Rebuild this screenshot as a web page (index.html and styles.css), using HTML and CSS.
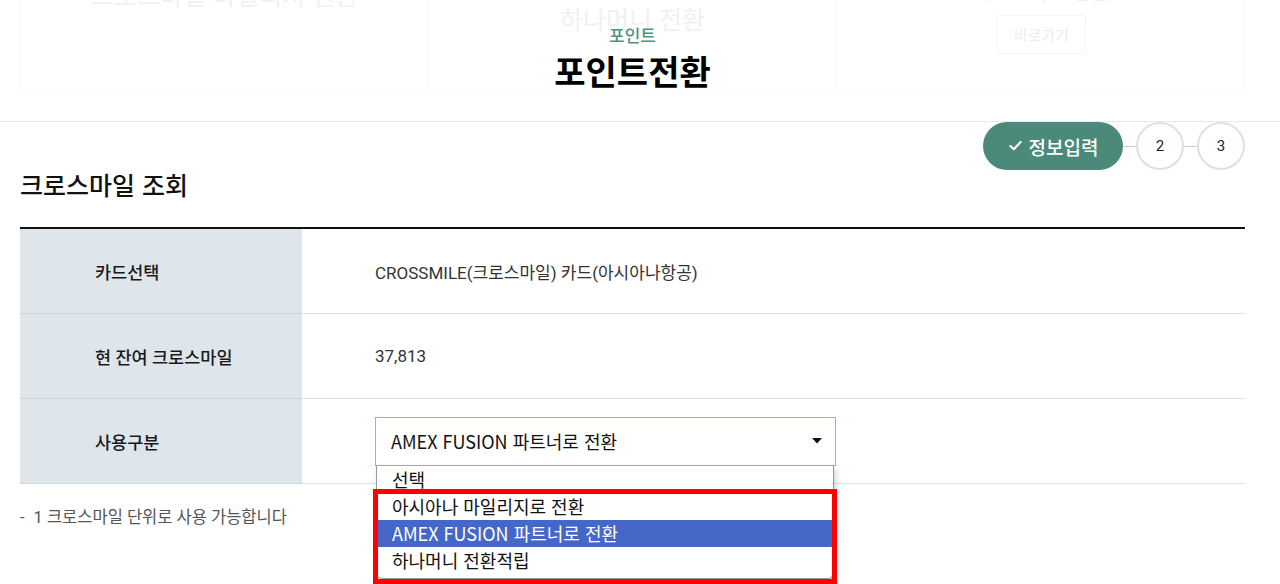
FILE: index.html
```html
<!DOCTYPE html>
<html lang="ko">
<head>
<meta charset="utf-8">
<title>포인트전환</title>
<link rel="stylesheet" href="styles.css">
</head>
<body>
<header class="page-head">
  <div class="ghost">
    <div class="ghost-col"><span class="ghost-cut">크로스마일 마일리지 전환</span></div>
    <div class="ghost-col"><span class="ghost-title">하나머니 전환</span></div>
    <div class="ghost-col"><span class="ghost-cut small">기프트카드 전환</span><span class="ghost-btn">바로가기</span></div>
  </div>
  <div class="head-titles">
    <p class="head-sub">포인트</p>
    <h1 class="head-main">포인트전환</h1>
  </div>
</header>

<main class="content">
  <div class="steps">
    <div class="step step-on"><svg class="check" viewBox="0 0 16 16" width="15" height="15"><path d="M2.5 8.5 L6.2 12 L13.5 4.2" fill="none" stroke="#fff" stroke-width="2.2" stroke-linecap="round" stroke-linejoin="round"/></svg>정보입력</div>
    <span class="step-line"></span>
    <div class="step step-num">2</div>
    <span class="step-line"></span>
    <div class="step step-num">3</div>
  </div>

  <h2 class="sec-title">크로스마일 조회</h2>

  <div class="info-table">
    <div class="row">
      <div class="th">카드선택</div>
      <div class="td">CROSSMILE(크로스마일) 카드(아시아나항공)</div>
    </div>
    <div class="row">
      <div class="th">현 잔여 크로스마일</div>
      <div class="td">37,813</div>
    </div>
    <div class="row">
      <div class="th">사용구분</div>
      <div class="td">
        <div class="select-wrap">
          <div class="select">
            <span>AMEX FUSION 파트너로 전환</span>
            <svg class="caret" viewBox="0 0 10 6" width="10" height="6"><path d="M0 0 H10 L5 5.5 Z" fill="#111"/></svg>
          </div>
          <ul class="options">
            <li class="opt">선택</li>
            <li class="opt">아시아나 마일리지로 전환</li>
            <li class="opt opt-sel">AMEX FUSION 파트너로 전환</li>
            <li class="opt">하나머니 전환적립</li>
          </ul>
          <div class="mark"></div>
        </div>
      </div>
    </div>
  </div>

  <p class="note"><span class="dash">-</span>1 크로스마일 단위로 사용 가능합니다</p>
</main>
</body>
</html>
```

FILE: styles.css
```css
* { box-sizing: border-box; }
html, body { margin: 0; padding: 0; }
body {
  width: 1280px;
  height: 584px;
  overflow: hidden;
  background: #fff;
  font-family: Roboto, "Noto Sans CJK KR", sans-serif;
  color: #222;
}

.page-head {
  position: relative;
  height: 122px;
  border-bottom: 1px solid #e8e8e8;
  overflow: hidden;
}
.ghost {
  position: absolute;
  left: 20px;
  top: 0;
  width: 1225px;
  height: 92px;
  display: grid;
  grid-template-columns: 408px 408px 409px;
  border: 1px solid #f9fafa;
  border-top: none;
  font-family: "Noto Sans CJK KR", sans-serif;
}
.ghost-col {
  position: relative;
  display: flex;
  flex-direction: column;
  align-items: center;
  border-right: 1px solid #f9fafa;
}
.ghost-col:last-child { border-right: none; }
.ghost-title {
  margin-top: 2px;
  font-size: 25px;
  line-height: 32px;
  color: #eef2f1;
}
.ghost-cut {
  margin-top: -22px;
  font-size: 25px;
  line-height: 32px;
  color: #eef2f1;
}
.ghost-cut.small { margin-top: -24px; font-size: 20px; }
.ghost-btn {
  margin-top: 7px;
  width: 89px;
  height: 39px;
  border: 1px solid #f5f5f5;
  border-radius: 3px;
  font-size: 15px;
  line-height: 37px;
  text-align: center;
  color: #ededed;
}
.head-titles {
  position: relative;
  display: flex;
  flex-direction: column;
  align-items: center;
  padding: 23px 35px 0 20px;
  font-family: "Noto Sans CJK KR", sans-serif;
}
.head-sub {
  margin: 0;
  font-size: 17px;
  line-height: 24px;
  font-weight: 500;
  color: #4f9381;
}
.head-main {
  margin: 4px 0 0;
  font-size: 34px;
  line-height: 40px;
  font-weight: 700;
  color: #000;
}

.content {
  padding: 0 35px 0 20px;
}
.steps {
  display: flex;
  justify-content: flex-end;
  align-items: center;
  height: 48px;
}
.step {
  height: 48px;
  border-radius: 24px;
  display: flex;
  align-items: center;
  justify-content: center;
}
.step-on {
  width: 140px;
  background: #4b8a7b;
  color: #fff;
  font-family: "Noto Sans CJK KR", sans-serif;
  font-size: 19px;
  font-weight: 500;
  gap: 6px;
}
.check { margin-top: -1px; }
.step-num {
  width: 48px;
  border: 2px solid #e0e0e0;
  background: #fff;
  font-size: 15px;
  color: #222;
}
.step-line {
  width: 13px;
  height: 1px;
  background: #cfcfcf;
}

.sec-title {
  margin: 0;
  font-family: "Noto Sans CJK KR", sans-serif;
  font-size: 25px;
  line-height: 28px;
  font-weight: 500;
  color: #111;
}

.info-table {
  margin-top: 29px;
  border-top: 2px solid #111;
}
.row {
  display: flex;
  height: 85px;
  border-bottom: 1px solid #e2e2e2;
}
.th {
  width: 282px;
  flex: none;
  background: #dfe6eb;
  border-bottom: 1px solid #cdd6dc;
  margin-bottom: -1px;
  display: flex;
  align-items: center;
  padding-left: 75px;
  font-size: 17.5px;
  font-weight: 500;
  color: #1a1a1a;
}
.td {
  flex: 1;
  display: flex;
  align-items: center;
  padding-left: 73px;
  font-size: 17px;
  color: #333;
}

.select-wrap {
  position: relative;
  width: 461px;
}
.select {
  height: 49px;
  border: 1px solid #7dcc86;
  display: flex;
  align-items: center;
  justify-content: space-between;
  padding: 0 13px 0 15px;
  font-family: "Noto Sans CJK KR", sans-serif;
  font-size: 18px;
  color: #111;
  background: #fff;
}
.options {
  position: absolute;
  left: 1px;
  top: 49px;
  width: 458px;
  margin: 0;
  padding: 0 0 4px;
  list-style: none;
  background: #fff;
  border: 1px solid #9a9a9a;
  border-top: none;
  border-radius: 0 0 6px 6px;
  box-shadow: 2px 3px 6px rgba(0,0,0,0.18);
  font-family: "Noto Sans CJK KR", sans-serif;
  font-size: 18px;
  color: #111;
  z-index: 2;
}
.opt {
  height: 27px;
  line-height: 26px;
  padding-left: 15px;
}
.opt-sel {
  background: #4467c8;
  color: #fff;
}
.mark {
  position: absolute;
  left: -2px;
  top: 72px;
  width: 464px;
  height: 95px;
  border: 5px solid #ff0000;
  z-index: 3;
  pointer-events: none;
}

.note {
  margin: 24px 0 0;
  font-size: 16.5px;
  line-height: 20px;
  color: #555;
  font-family: Roboto, "Noto Sans CJK KR", sans-serif;
}
.dash { margin-right: 9px; }
```
